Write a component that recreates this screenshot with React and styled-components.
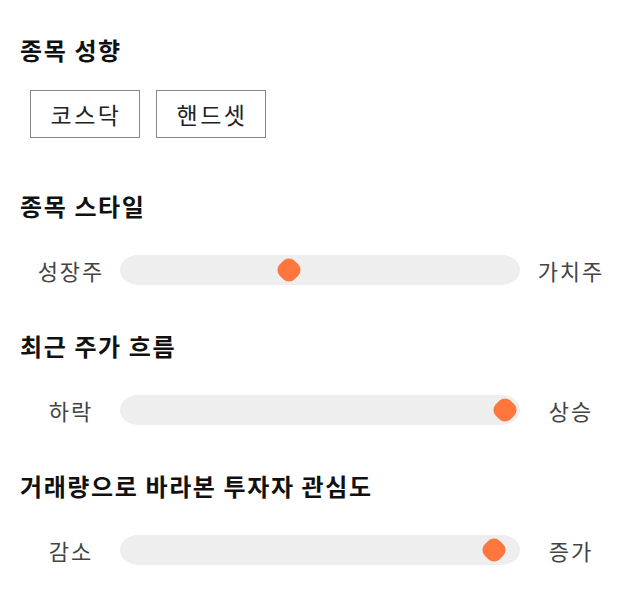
import styled, { createGlobalStyle } from 'styled-components';

const GlobalStyle = createGlobalStyle`
  body {
    margin: 0;
    background: #fff;
    font-family: "Noto Sans CJK KR", "Noto Sans", sans-serif;
  }
`;

const Page = styled.div`
  padding: 35px 20px 20px 20px;
  width: 640px;
  box-sizing: border-box;
`;

const Title = styled.h2`
  margin: ${props => props.first ? '0' : props.gap}px 0 0 0;
  font-size: 24px;
  line-height: 30px;
  letter-spacing: 1.6px;
  font-weight: 700;
  color: #111;
`;

const ButtonRow = styled.div`
  display: flex;
  gap: 16px;
  margin: 25px 0 0 10px;
`;

const TypeButton = styled.button`
  width: 110px;
  height: 48px;
  box-sizing: border-box;
  border: 1px solid #888;
  background: #fff;
  font-family: inherit;
  font-size: 23px;
  letter-spacing: 2.5px;
  color: #222;
  padding: 0 0 0 2px;
`;

const SliderRow = styled.div`
  display: grid;
  grid-template-columns: 100px 400px 100px;
  align-items: center;
  margin-top: 33px;
  height: 30px;
`;

const Label = styled.span`
  text-align: center;
  font-size: 22px;
  letter-spacing: 2px;
  padding-left: 2px;
  color: #444;
`;

const Track = styled.div`
  position: relative;
  height: 30px;
  background: #eeeeee;
  border-radius: 18px / 15px;
`;

const Thumb = styled.div`
  position: absolute;
  top: 50%;
  width: 21px;
  height: 21px;
  background: #ff773d;
  border-radius: 8px;
  transform: translate(-50%, -50%) rotate(45deg);
`;

const sliders = [
  { title: '종목 스타일', left: '성장주', right: '가치주', pos: 169, gap: 53 },
  { title: '최근 주가 흐름', left: '하락', right: '상승', pos: 385, gap: 47 },
  { title: '거래량으로 바라본 투자자 관심도', left: '감소', right: '증가', pos: 374, gap: 47 },
];

export default function App() {
  return (
    <Page>
      <GlobalStyle />
      <Title first>종목 성향</Title>
      <ButtonRow>
        <TypeButton>코스닥</TypeButton>
        <TypeButton>핸드셋</TypeButton>
      </ButtonRow>
      {sliders.map(s => (
        <div key={s.title}>
          <Title gap={s.gap}>{s.title}</Title>
          <SliderRow>
            <Label>{s.left}</Label>
            <Track>
              <Thumb style={{ left: s.pos }} />
            </Track>
            <Label>{s.right}</Label>
          </SliderRow>
        </div>
      ))}
    </Page>
  );
}
